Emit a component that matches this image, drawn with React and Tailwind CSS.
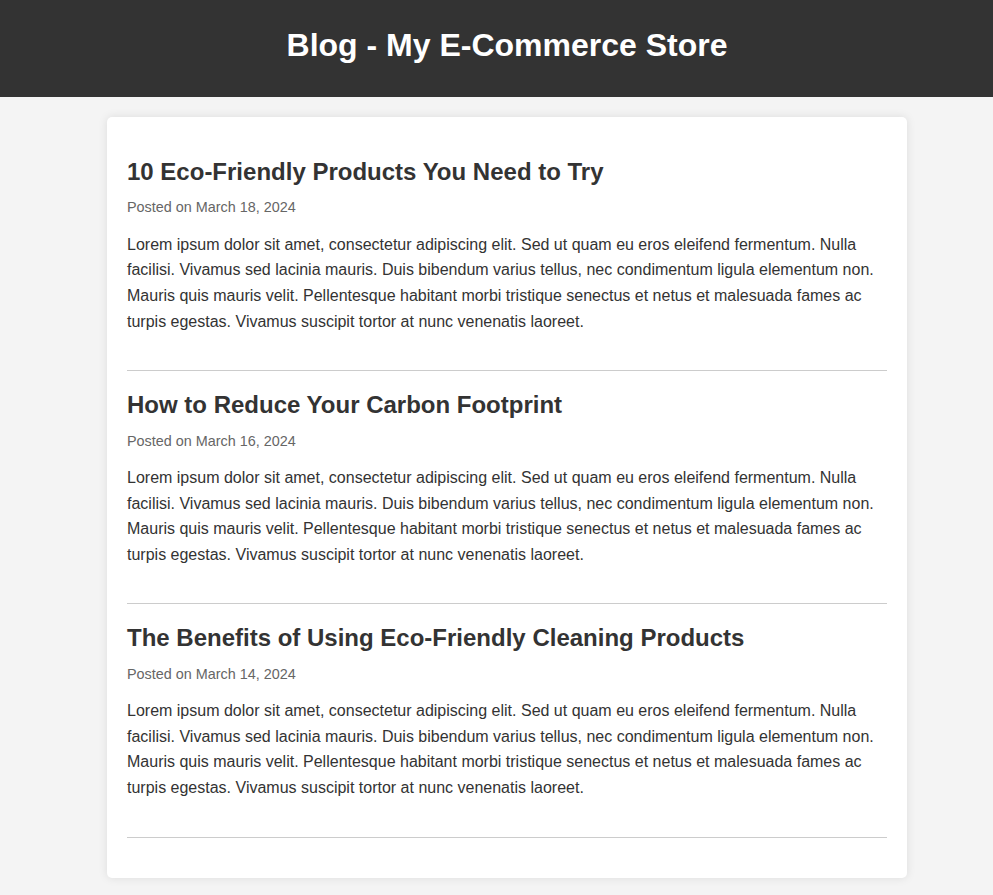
import React from 'react';

const posts = [
  { title: '10 Eco-Friendly Products You Need to Try', date: 'March 18, 2024' },
  { title: 'How to Reduce Your Carbon Footprint', date: 'March 16, 2024' },
  { title: 'The Benefits of Using Eco-Friendly Cleaning Products', date: 'March 14, 2024' },
];

const lorem =
  'Lorem ipsum dolor sit amet, consectetur adipiscing elit. Sed ut quam eu eros eleifend fermentum. Nulla facilisi. Vivamus sed lacinia mauris. Duis bibendum varius tellus, nec condimentum ligula elementum non. Mauris quis mauris velit. Pellentesque habitant morbi tristique senectus et netus et malesuada fames ac turpis egestas. Vivamus suscipit tortor at nunc venenatis laoreet.';

const App = () => {
  return (
    <div className="min-h-screen bg-[#f4f4f4] text-[#333] font-['Liberation_Sans',Arial,sans-serif]">
      <header className="h-[97px] bg-[#333] pl-[21px] pt-[29px]">
        <h1 className="text-center text-[32px] leading-[32px] font-bold text-white">
          Blog - My E-Commerce Store
        </h1>
      </header>

      <main className="pl-[21px] pt-5">
        <div className="mx-auto w-[800px] rounded-[5px] bg-white px-5 pt-9 pb-10 shadow-[0_0_10px_rgba(0,0,0,0.1)]">
          {posts.map((post, i) => (
            <article
              key={post.title}
              className={`border-b border-[#ccc] pb-[36px] ${i > 0 ? 'mt-[15px]' : ''}`}
            >
              <h2 className="text-[24px] leading-[38.4px] font-bold text-[#333]">{post.title}</h2>
              <p className="mt-[5px] text-[14.4px] leading-[23.04px] text-[#666]">Posted on {post.date}</p>
              <p className="mt-[12.4px] text-[16px] leading-[25.6px] text-[#333]">{lorem}</p>
            </article>
          ))}
        </div>
      </main>
    </div>
  );
};

export default App;
